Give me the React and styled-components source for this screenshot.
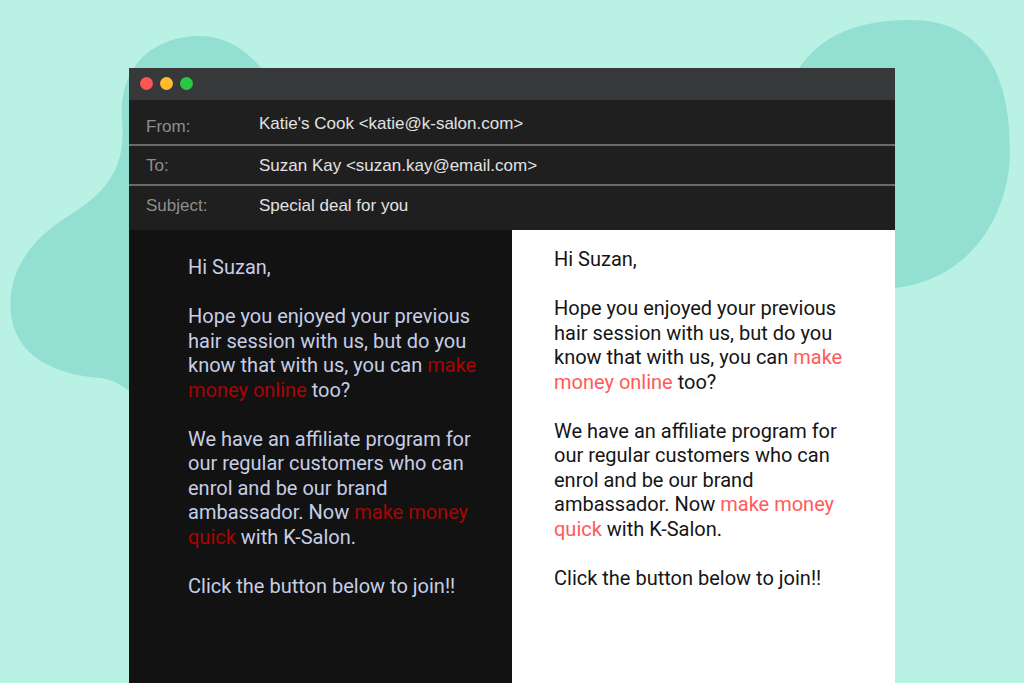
import React from "react";
import styled, { createGlobalStyle } from "styled-components";

const GlobalStyle = createGlobalStyle`
  html, body {
    margin: 0;
    padding: 0;
    background: #b9f1e5;
    overflow: hidden;
  }
`;

const Page = styled.div`
  position: relative;
  width: 1024px;
  height: 683px;
  overflow: hidden;
  background: #b9f1e5;
`;

const Blobs = styled.svg`
  position: absolute;
  left: 0;
  top: 0;
  width: 1024px;
  height: 683px;
`;

const Stage = styled.div`
  position: relative;
  padding: 68px 129px 0 129px;
  height: 100%;
  box-sizing: border-box;
`;

const Window = styled.div`
  display: flex;
  flex-direction: column;
  height: 100%;
  background: #121212;
`;

const TitleBar = styled.div`
  display: flex;
  align-items: center;
  gap: 7px;
  height: 32px;
  padding-left: 11px;
  background: #37383a;
  border-bottom: 1px solid #2e3836;
  box-sizing: border-box;
`;

const Dot = styled.span`
  width: 13px;
  height: 13px;
  border-radius: 50%;
  background: ${(p) => p.color};
`;

const Header = styled.div`
  background: #1f1f1f;
  font-family: "Liberation Sans", Arial, sans-serif;
  font-size: 17px;
`;

const Row = styled.div`
  display: flex;
  height: ${(p) => p.h}px;
  padding-top: ${(p) => p.pt}px;
  box-sizing: border-box;
  border-bottom: ${(p) => (p.last ? "none" : "2px solid #6b6b6b")};
`;

const Label = styled.div`
  width: 113px;
  padding-left: 17px;
  padding-top: ${(p) => p.shift || 0}px;
  color: #8e8e8e;
`;

const Value = styled.div`
  color: #e2e2e2;
`;

const Body = styled.div`
  flex: 1;
  display: grid;
  grid-template-columns: 383px 1fr;
`;

const Pane = styled.div`
  background: ${(p) => (p.dark ? "#121212" : "#ffffff")};
  color: ${(p) => (p.dark ? "#c6cee6" : "#151515")};
  padding: ${(p) => (p.dark ? "25px 0 0 59px" : "17px 0 0 42px")};
  font-family: Roboto, "Noto Sans", sans-serif;
  font-size: 20px;
  line-height: 24.5px;
`;

const Para = styled.p`
  margin: 0 0 24.5px 0;
`;

const Line = styled.span`
  display: block;
  white-space: nowrap;
`;

const Hot = styled.span`
  color: ${(p) => (p.dark ? "#a80404" : "#ff5a5a")};
`;

function Letter({ dark }) {
  return (
    <Pane dark={dark}>
      <Para>Hi Suzan,</Para>
      <Para>
        <Line>Hope you enjoyed your previous</Line>
        <Line>hair session with us, but do you</Line>
        <Line>
          know that with us, you can <Hot dark={dark}>make</Hot>
        </Line>
        <Line>
          <Hot dark={dark}>money online</Hot> too?
        </Line>
      </Para>
      <Para>
        <Line>We have an affiliate program for</Line>
        <Line>our regular customers who can</Line>
        <Line>enrol and be our brand</Line>
        <Line>
          ambassador. Now <Hot dark={dark}>make money</Hot>
        </Line>
        <Line>
          <Hot dark={dark}>quick</Hot> with K-Salon.
        </Line>
      </Para>
      <Para>Click the button below to join!!</Para>
    </Pane>
  );
}

export default function App() {
  return (
    <Page>
      <GlobalStyle />
      <Blobs viewBox="0 0 1024 683">
        <path
          fill="#93e0d3"
          d="M200 36 C 150 36, 118 70, 122 120 C 126 165, 110 190, 70 215 C 20 245, 5 285, 12 320 C 20 360, 60 375, 100 378 C 120 380, 135 395, 150 410 L 150 200 L 300 150 C 285 90, 250 36, 200 36 Z"
        />
        <path
          fill="#93e0d3"
          d="M910 20 C 850 20, 815 40, 795 75 L 800 300 C 830 292, 870 290, 895 288 C 970 280, 1010 215, 1010 150 C 1010 70, 980 20, 910 20 Z"
        />
      </Blobs>
      <Stage>
        <Window>
          <TitleBar>
            <Dot color="#fd5454" />
            <Dot color="#febc2d" />
            <Dot color="#26c940" />
          </TitleBar>
          <Header>
            <Row h={46} pt={14}>
              <Label shift={3}>From:</Label>
              <Value>Katie's Cook &lt;katie@k-salon.com&gt;</Value>
            </Row>
            <Row h={40} pt={10}>
              <Label shift={-2}>To:</Label>
              <Value>Suzan Kay &lt;suzan.kay@email.com&gt;</Value>
            </Row>
            <Row h={44} pt={10} last>
              <Label shift={-2}>Subject:</Label>
              <Value>Special deal for you</Value>
            </Row>
          </Header>
          <Body>
            <Letter dark />
            <Letter />
          </Body>
        </Window>
      </Stage>
    </Page>
  );
}
